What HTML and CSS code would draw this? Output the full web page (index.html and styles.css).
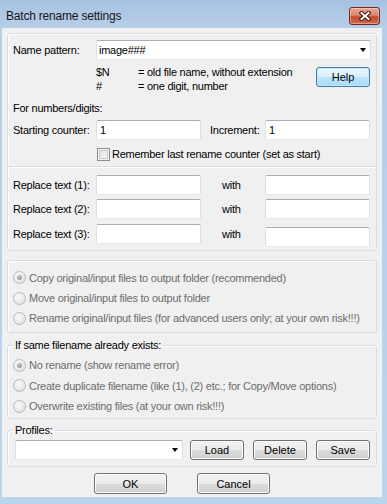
FILE: index.html
```html
<!doctype html>
<html lang="en">
<head>
  <meta charset="utf-8">
  <title>Batch rename settings</title>
  <link rel="stylesheet" href="styles.css">
</head>
<body>
<div class="dialog">
  <div class="titleBar">
    <span class="titleBar__text">Batch rename settings</span>
    <button type="button" class="closeButton" aria-label="Close">
      <svg width="12" height="10" viewBox="0 0 12 10">
        <path d="M2.5 2 L9.5 8 M9.5 2 L2.5 8" stroke="#4a1710" stroke-width="4.2" stroke-linecap="square"/>
        <path d="M2.5 2 L9.5 8 M9.5 2 L2.5 8" stroke="#ffffff" stroke-width="2" stroke-linecap="square"/>
      </svg>
    </button>
  </div>

  <div class="client">
    <div class="groupBox">
      <div class="patternSection">
        <div class="formRow formRow--pattern">
          <span class="formLabel">Name pattern:</span>
          <div class="comboBox comboBox--pattern">
            <span class="comboBox__text">image###</span>
            <span class="comboBox__arrow"></span>
          </div>
        </div>

        <div class="hintRow">
          <div class="hints">
            <div><span class="hints__key">$N</span>= old file name, without extension</div>
            <div><span class="hints__key">#</span>= one digit, number</div>
          </div>
          <button type="button" class="button button--default button--help">Help</button>
        </div>

        <div class="caption">For numbers/digits:</div>

        <div class="formRow formRow--counter">
          <span class="formLabel">Starting counter:</span>
          <input type="text" class="textBox" value="1">
          <span class="formLabel formLabel--increment">Increment:</span>
          <input type="text" class="textBox" value="1">
        </div>

        <div class="checkRow">
          <span class="checkBox"></span>
          <span>Remember last rename counter (set as start)</span>
        </div>
      </div>

      <div class="replaceSection">
        <div class="formRow formRow--replace1">
          <span class="formLabel">Replace text (1):</span>
          <input type="text" class="textBox">
          <span class="withLabel">with</span>
          <input type="text" class="textBox">
        </div>
        <div class="formRow formRow--replace2">
          <span class="formLabel">Replace text (2):</span>
          <input type="text" class="textBox">
          <span class="withLabel">with</span>
          <input type="text" class="textBox">
        </div>
        <div class="formRow formRow--replace3">
          <span class="formLabel">Replace text (3):</span>
          <input type="text" class="textBox">
          <span class="withLabel">with</span>
          <input type="text" class="textBox textBox--lower">
        </div>
      </div>
    </div>

    <div class="groupBox groupBox--mode">
      <div class="radioRow radioRow--tall"><span class="radio radio--checked"></span>Copy original/input files to output folder (recommended)</div>
      <div class="radioRow"><span class="radio"></span>Move original/input files to output folder</div>
      <div class="radioRow"><span class="radio"></span>Rename original/input files (for advanced users only; at your own risk!!!)</div>
    </div>

    <fieldset class="groupBox groupBox--exists">
      <legend class="groupBox__legend">If same filename already exists:</legend>
      <div class="radioRow"><span class="radio radio--checked"></span>No rename (show rename error)</div>
      <div class="radioRow radioRow--tall"><span class="radio"></span>Create duplicate filename (like (1), (2) etc.; for Copy/Move options)</div>
      <div class="radioRow"><span class="radio"></span>Overwrite existing files (at your own risk!!!)</div>
    </fieldset>

    <fieldset class="groupBox groupBox--profiles">
      <legend class="groupBox__legend groupBox__legend--profiles">Profiles:</legend>
      <div class="profileRow">
        <div class="comboBox comboBox--profiles">
          <span class="comboBox__text"></span>
          <span class="comboBox__arrow"></span>
        </div>
        <button type="button" class="button button--profile">Load</button>
        <button type="button" class="button button--profile">Delete</button>
        <button type="button" class="button button--profile">Save</button>
      </div>
    </fieldset>

    <div class="footer">
      <button type="button" class="button button--footer">OK</button>
      <button type="button" class="button button--footer">Cancel</button>
    </div>
  </div>
</div>
</body>
</html>
```

FILE: styles.css
```css
body {
  margin: 0;
  overflow: hidden;
  font-family: "Liberation Sans", Arial, sans-serif;
  font-size: 11px;
  letter-spacing: -0.25px;
  color: #000;
  background: #bcd3ec;
}

.dialog {
  width: 387px;
  height: 504px;
  background: linear-gradient(to bottom, #a6c2e1 0, #b7cee9 28px, #bcd3ec 100%);
}

/* title bar */

.titleBar {
  height: 28px;
  box-sizing: border-box;
  display: flex;
  justify-content: space-between;
  align-items: flex-start;
  padding: 0 7px 0 6px;
}

.titleBar__text {
  margin-top: 9px;
  font-size: 12px;
  line-height: 14px;
  letter-spacing: -0.2px;
  color: #151515;
}

.closeButton {
  margin-top: 7px;
  width: 31px;
  height: 18px;
  box-sizing: border-box;
  padding: 0;
  display: flex;
  align-items: center;
  justify-content: center;
  border: 1px solid #6e2a20;
  border-radius: 3px;
  background: linear-gradient(to bottom, #e8a796 0%, #d98670 45%, #c44a31 55%, #cf6a4e 100%);
  box-shadow: inset 0 0 0 1px rgba(255, 255, 255, 0.35);
}

/* client area */

.client {
  margin-left: 2px;
  width: 380px;
  height: 469px;
  box-sizing: border-box;
  padding: 5px 5px 0;
  background: #f0f0f0;
}

.groupBox {
  width: 370px;
  box-sizing: border-box;
  margin: 0;
  min-width: 0;
  border: 1px solid #d5dfe5;
  border-radius: 3px;
  box-shadow: inset 1px 1px 0 #fff;
}

.groupBox__legend {
  padding: 0 2px;
  line-height: 14px;
}

.groupBox__legend--profiles {
  margin-left: -2px;
}

.patternSection {
  display: flex;
  flex-direction: column;
  padding: 0 0 5px 5px;
}

.replaceSection {
  display: flex;
  flex-direction: column;
  padding: 0 0 6px 5px;
  border-top: 1px solid #d5dfe5;
  box-shadow: inset 0 1px 0 #fff;
}

.formRow {
  display: flex;
  align-items: center;
  height: 20px;
}

.formRow--pattern {
  margin-top: 6px;
}

.formRow--counter {
  margin-top: 5px;
}

.formRow--replace1 {
  margin-top: 8px;
}

.formRow--replace2 {
  margin-top: 4px;
}

.formRow--replace3 {
  margin-top: 5px;
  align-items: flex-start;
}

.formRow--replace3 .formLabel,
.formRow--replace3 .withLabel {
  line-height: 20px;
}

.formLabel {
  width: 83px;
  flex: none;
  white-space: nowrap;
}

.formLabel--increment {
  width: 55px;
  margin-left: 9px;
}

.withLabel {
  width: 43px;
  margin-left: 21px;
}

.textBox {
  width: 105px;
  height: 20px;
  box-sizing: border-box;
  margin: 0;
  padding: 0 3px;
  font: inherit;
  color: #000;
  background: #fff;
  border: 1px solid #dbdfe6;
  border-top-color: #abadb3;
  border-bottom-color: #e3e9ef;
  border-radius: 2px;
  outline: none;
}

.textBox--lower {
  margin-top: 3px;
}

.comboBox {
  height: 20px;
  box-sizing: border-box;
  display: flex;
  align-items: center;
  justify-content: space-between;
  padding: 0 4px 0 2px;
  background: #fff;
  border: 1px solid #dbdfe6;
  border-top-color: #abadb3;
  border-bottom-color: #e3e9ef;
  border-radius: 2px;
}

.comboBox--pattern {
  width: 275px;
}

.comboBox--profiles {
  width: 168px;
}

.comboBox__arrow {
  width: 0;
  height: 0;
  border-left: 3.5px solid transparent;
  border-right: 3.5px solid transparent;
  border-top: 4px solid #000;
}

.hintRow {
  display: flex;
  align-items: flex-start;
  margin-top: 5px;
}

.hints {
  margin-left: 83px;
  width: 220px;
  line-height: 14px;
}

.hints__key {
  display: inline-block;
  width: 42px;
}

.caption {
  margin-top: 8px;
  line-height: 14px;
}

.checkRow {
  display: flex;
  align-items: center;
  height: 14px;
  margin-top: 7px;
  gap: 2px;
}

.checkBox {
  width: 13px;
  height: 13px;
  box-sizing: border-box;
  margin-left: 84px;
  margin-top: 1px;
  border: 1px solid #8f8f8f;
  background: linear-gradient(135deg, #dcdcdc, #fbfbfb);
  box-shadow: inset 0 0 0 1px #f4f4f4, inset 0 0 0 2px #c9c9c9;
}

/* radio groups */

.groupBox--mode {
  margin-top: 9px;
  padding: 6px 0 4px 5px;
}

.groupBox--exists {
  margin-top: 5px;
  padding: 3px 0 2px 5px;
}

.groupBox--profiles {
  margin-top: 4px;
  padding: 3px 0 6px 7px;
}

.radioRow {
  display: flex;
  align-items: center;
  gap: 3px;
  height: 20px;
  color: #6d6d6d;
  white-space: nowrap;
}

.radioRow--tall {
  height: 21px;
}

.radio {
  position: relative;
  width: 13px;
  height: 13px;
  box-sizing: border-box;
  flex: none;
  border: 1px solid #b9b9b9;
  border-radius: 50%;
  background: radial-gradient(circle at 40% 35%, #fafafa 0, #ececec 50%, #d8d8d8 100%);
}

.radio--checked::after {
  content: "";
  position: absolute;
  left: 3px;
  top: 3px;
  width: 5px;
  height: 5px;
  border-radius: 50%;
  background: radial-gradient(circle at 40% 35%, #c4c4c4, #8c8c8c);
}

.profileRow {
  display: flex;
  align-items: center;
  height: 20px;
}

/* buttons */

.button {
  height: 20px;
  box-sizing: border-box;
  padding: 0;
  font: inherit;
  color: #000;
  border: 1px solid #707070;
  border-radius: 3px;
  background: linear-gradient(to bottom, #f2f2f2 0%, #ebebeb 50%, #dddddd 51%, #cfcfcf 100%);
  box-shadow: inset 0 0 0 1px #fcfcfc;
}

.button--default {
  border-color: #3c7fb1;
  background: linear-gradient(to bottom, #eaf6fd 0%, #d9f0fc 50%, #bee6fd 51%, #a7d9f5 100%);
  box-shadow: inset 0 0 0 1px #c8e8f9;
}

.button--help {
  width: 54px;
  margin-top: 2px;
}

.button--profile {
  width: 54px;
  margin-left: 9px;
}

.button--profile:first-of-type {
  margin-left: 7px;
}

.footer {
  display: flex;
  gap: 30px;
  margin-top: 6px;
  padding-left: 87px;
}

.button--footer {
  width: 73px;
  height: 21px;
}
```
